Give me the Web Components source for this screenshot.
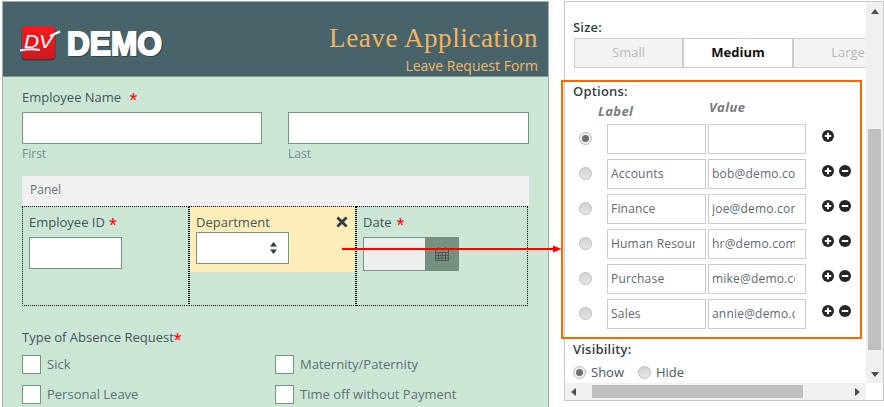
<!DOCTYPE html>
<html><head><meta charset="utf-8"><title>Leave Application</title>
<style>html,body{margin:0;padding:0;background:#fff}body{width:884px;height:407px;overflow:hidden;font-family:"Open Sans",sans-serif}</style>
</head><body>
<dv-app>
  <dv-form slot="form">
    <dv-header slot="header"></dv-header>
    <dv-name-row></dv-name-row>
    <dv-panel></dv-panel>
    <dv-absence></dv-absence>
  </dv-form>
  <dv-props slot="props"></dv-props>
  <dv-annotation slot="over"></dv-annotation>
</dv-app>
<script>
function def(name, css, html){
  customElements.define(name, class extends HTMLElement{
    constructor(){super();const s=this.attachShadow({mode:'open'});
      const h=typeof html==='function'?html(this):html;
      s.innerHTML='<style>'+css+'</style>'+h;}
  });
}
const star=(r)=>`<span style="color:#f00;font-size:20px;line-height:10px;margin-left:${r}px;font-family:'Liberation Sans',sans-serif;vertical-align:-5px">*</span>`;

def('dv-app',`:host{display:flex;position:relative;width:884px;height:407px;overflow:hidden;align-items:flex-start;padding-top:1px;padding-left:2px;box-sizing:border-box}
.g{display:block;width:15px;flex:none}`,
`<slot name="form"></slot><div class="g"></div><slot name="props"></slot><slot name="over"></slot>`);

def('dv-form',`:host{display:block;width:547px;height:420px;flex:none;box-sizing:border-box;border:1px solid #9fb2a8;background:#cbe6d5;box-shadow:3px 0 6px rgba(0,0,0,.03);color:#44555c;font-size:13px}
.b{padding:0 19px}`,`<slot name="header"></slot><div class="b"><slot></slot></div>`);

def('dv-logo',`:host{display:block;width:150px;height:44px}svg{display:block;overflow:visible}`,
`<svg width="150" height="44" viewBox="0 0 150 44">
<defs><linearGradient id="r" x1="0" y1="0" x2="0" y2="1"><stop offset="0" stop-color="#f2191f"/><stop offset="1" stop-color="#cf1a20"/></linearGradient></defs>
<rect x="-.5" y="1.500" width="34" height="33" rx="4" fill="#1d2b2e" opacity=".6"/>
<rect x="0" y="0" width="33" height="33" rx="4" fill="url(#r)"/>
<text x="2" y="22" font-family="'Liberation Sans',sans-serif" font-style="italic" font-size="19" fill="#fff" textLength="29" lengthAdjust="spacingAndGlyphs">DV</text>
<path d="M-2 24.500C6 23 12 23 18 24" stroke="#fff" stroke-width="2" fill="none"/>
<path d="M28 10L38 5.500" stroke="#fff" stroke-width="2" fill="none"/>
<text x="46" y="30" font-family="'Liberation Sans',sans-serif" font-weight="700" font-size="33" fill="#202f33" opacity=".55" stroke="#202f33" stroke-width="2" textLength="95" lengthAdjust="spacingAndGlyphs">DEMO</text>
<text x="45" y="29" font-family="'Liberation Sans',sans-serif" font-weight="700" font-size="33" fill="#fff" stroke="#fff" stroke-width="2" textLength="95" lengthAdjust="spacingAndGlyphs">DEMO</text>
</svg>`);

def('dv-header',`:host{display:flex;justify-content:space-between;height:74px;background:#48636a;border-bottom:1px solid #7d9c8c;padding:0 10px 0 19px}
dv-logo{margin-top:24px}
.r{text-align:right;color:#f3b562}
.t{font:27px/32px "Liberation Serif",serif;margin-top:20px;letter-spacing:.6px}
.s{font:400 14px/18px "Open Sans",sans-serif;margin-top:3px;color:#f0b868}`,
`<dv-logo></dv-logo><div class="r"><div class="t">Leave Application</div><div class="s">Leave Request Form</div></div>`);

def('dv-box',`:host{display:block;box-sizing:border-box;background:#fff;border:1px solid #76967f;height:32px}`,`<slot></slot>`);

def('dv-name-row',`:host{display:block;padding-top:11px}
.l{line-height:18px;height:18px;color:#44555c}
.g{display:grid;grid-template-columns:240px 241px;column-gap:26px;margin-top:6px}
.h{font-size:12px;line-height:16px;color:#7b8d8d;margin-top:2px}`,
`<div class="l">Employee Name ${star(5)}</div>
<div class="g"><div><dv-box></dv-box><div class="h">First</div></div><div><dv-box></dv-box><div class="h">Last</div></div></div>`);

def('dv-panel',`:host{display:block;margin-top:14px;width:507px}
.h{height:30px;background:#f0f0f0;font-size:12px;line-height:27px;padding-left:8px;color:#6a7272}
.r{display:flex}
.c{box-sizing:border-box;height:100px;border:1px dotted #000;flex:none;width:167px}
.c3{width:172px;padding:7px 6px}.c1{padding:7px 6px}
.l{line-height:16px;height:16px;color:#44555c}
.y{background:#fdeeb9;height:65px;box-sizing:border-box;padding:7px 6px 8px}
.yl{display:flex;justify-content:space-between;align-items:center;padding-right:1px}
.x{display:block}
.sel{margin-top:2px;width:93px}
.in1{margin-top:7px;width:93px}
.grp{margin-top:7px;display:flex;width:96px;height:34px;box-sizing:border-box}
.d{flex:1;background:#eee;border:1px solid #76967f;border-right:0;box-sizing:border-box}
.a{width:34px;background:#75907f;display:flex;align-items:center;justify-content:center}`,
`<div class="h">Panel</div><div class="r">
<div class="c c1"><div class="l">Employee ID${star(4)}</div><dv-box class="in1"></dv-box></div>
<div class="c"><div class="y"><div class="yl"><span class="l">Department</span>
<svg class="x" width="12" height="12" viewBox="0 0 12 12"><path d="M2.400 .6 6 4 9.600 .6 11.600 2.600 8 6 11.600 9.400 9.600 11.400 6 8 2.400 11.400 .4 9.400 4 6 .4 2.600Z" fill="#333f44"/></svg></div>
<dv-box class="sel"><svg width="9" height="13" viewBox="0 0 9 13" style="display:block;margin-left:72px;margin-top:9px"><path d="M4.500 0 8 4.500H1ZM1 7.500H8L4.500 12Z" fill="#2f3a3e"/></svg></dv-box></div></div>
<div class="c c3"><div class="l">Date${star(5)}</div><div class="grp"><div class="d"></div><div class="a">
<svg width="14" height="15" viewBox="0 0 14 15" style="margin:-1px 1px 0 0"><path d="M.5 3.500H13.500V14.500H.5ZM.5 6.500H13.500M.5 9.500H13.500M.5 12H13.500M3.500 6.500V14.500M7 6.500V14.500M10.500 6.500V14.500M3.500 1V3.500M10.500 1V3.500" fill="none" stroke="#4c5a55" stroke-width="1"/></svg></div></div></div>
</div>`);

def('dv-check',`:host{display:flex;align-items:center;height:19px;color:#5f7377;font-size:13px}
i{display:block;box-sizing:border-box;width:19px;height:19px;background:#fff;border:1px solid #76967f;margin-right:6px;flex:none}
span{display:block;margin-top:-2px}`,`<i></i><span><slot></slot></span>`);

def('dv-absence',`:host{display:block;margin-top:23px}
.l{line-height:16px;height:16px;color:#44555c}
.g{display:grid;grid-template-columns:253px 253px;row-gap:11px;margin-top:10px}`,
`<div class="l">Type of Absence Request${star(0)}</div>
<div class="g"><dv-check>Sick</dv-check><dv-check>Maternity/Paternity</dv-check><dv-check>Personal Leave</dv-check><dv-check>Time off without Payment</dv-check></div>`);

def('dv-radio',`:host{display:block;width:13px;height:13px;box-sizing:border-box;border-radius:50%;border:1px solid #bdbdbd;background:linear-gradient(#d2d2d2,#e6e6e6);flex:none;position:relative}
:host([checked]){background:#eee}
:host([checked]) i{display:block;position:absolute;left:2px;top:2px;width:7px;height:7px;border-radius:50%;background:#6f6f6f}`,`<i></i>`);

def('dv-opt',`:host{display:flex;align-items:center;height:30px}
dv-radio{margin-left:6px;margin-bottom:2px}
.i{box-sizing:border-box;height:30px;border:1px solid #ccc;background:#fff;font-size:12px;letter-spacing:.2px;color:#5c6a72;line-height:28px;padding:0 10px 0 3px}
.i div{overflow:hidden;white-space:nowrap;height:28px}
.a{width:99px;margin-left:15px}.b{width:98px;margin-left:2px}
svg{display:block;margin-bottom:6px;flex:none}
.p{margin-left:16px}.m{margin-left:5px}`,
(h)=>`<dv-radio ${h.hasAttribute('checked')?'checked':''}></dv-radio><div class="i a"><div>${h.getAttribute('label')||''}</div></div><div class="i b"><div>${h.getAttribute('value')||''}</div></div>
<svg class="p" width="12" height="12" viewBox="0 0 12 12"><circle cx="6" cy="6" r="6" fill="#262626"/><path d="M6 2.800V9.200M2.800 6H9.200" stroke="#fff" stroke-width="2"/></svg>
${h.hasAttribute('first')?'':'<svg class="m" width="12" height="12" viewBox="0 0 12 12"><circle cx="6" cy="6" r="6" fill="#262626"/><path d="M2.800 6H9.200" stroke="#fff" stroke-width="2"/></svg>'}`);

def('dv-props',`:host{display:grid;grid-template-columns:301px 17px;grid-template-rows:381px 17px;width:320px;height:400px;box-sizing:border-box;border:1px solid #c8c8c8;background:#fff;flex:none}
.c{overflow:hidden;padding:17px 0 0 8px;box-sizing:border-box;font-size:13px;color:#3c4a52}
.h{font-weight:600;line-height:16px;height:16px;letter-spacing:.2px;color:#333f46}
.seg{display:flex;margin:3px 0 0 1px;width:400px}
.seg div{box-sizing:border-box;height:30px;border:1px solid #ccc;background:#f3f3f3;color:#b9b9b9;text-align:center;line-height:26px;width:110px;font-weight:500}
.seg div:first-child{width:109px}
.seg .on{background:#fff;color:#111;font-weight:700}
.cols{display:flex;height:25px;font-weight:700;font-style:italic;color:#7b7b7b;line-height:16px;letter-spacing:.4px}
.cols span:first-child{margin:4px 0 0 25px;width:111px}
.rows{display:flex;flex-direction:column;gap:5px}
.vis{display:flex;align-items:center;margin-top:7px;height:16px;color:#4a5860}
.vis span{margin:0 14px 0 5px}
.vs{display:flex;flex-direction:column;align-items:center;background:#f0f0f0;grid-row:1;grid-column:2;height:381px}
.hs{display:flex;align-items:center;background:#f0f0f0;grid-row:2;grid-column:1}
.vt{width:13px;height:221px;background:#c0c0c0;margin-top:126px;margin-bottom:auto}
.ht{width:211px;height:13px;background:#c0c0c0;margin-left:27px;margin-right:auto}
.up,.dn{width:0;height:0;border:4px solid transparent}
.up{border-bottom:5px solid #4d4d4d;border-top:0;margin-top:7px;margin-bottom:-11px}
.dn{border-top:5px solid #4d4d4d;border-bottom:0;margin-bottom:6px}
.lf,.rg{width:0;height:0;border:4px solid transparent;flex:none}
.lf{border-right:5px solid #4d4d4d;border-left:0;margin-left:6px;margin-right:-11px}
.rg{border-left:5px solid #4d4d4d;border-right:0;margin-right:6px}`,
`<div class="c">
<div class="h">Size:</div>
<div class="seg"><div>Small</div><div class="on">Medium</div><div>Large</div></div>
<div class="h" style="margin-top:15px">Options:</div>
<div class="cols"><span>Label</span><span>Value</span></div>
<div class="rows">
<dv-opt checked first></dv-opt>
<dv-opt label="Accounts" value="bob@demo.com"></dv-opt>
<dv-opt label="Finance" value="joe@demo.com"></dv-opt>
<dv-opt label="Human Resources" value="hr@demo.com"></dv-opt>
<dv-opt label="Purchase" value="mike@demo.com"></dv-opt>
<dv-opt label="Sales" value="annie@demo.com"></dv-opt>
</div>
<div class="h" style="margin-top:12px">Visibility:</div>
<div class="vis"><dv-radio checked></dv-radio><span>Show</span><dv-radio></dv-radio><span>Hide</span></div>
</div>
<div class="vs"><div class="up"></div><div class="vt"></div><div class="dn"></div></div>
<div class="hs"><div class="lf"></div><div class="ht"></div><div class="rg"></div></div>`);

def('dv-annotation',`:host{display:block;position:absolute;left:0;top:0;width:884px;height:407px;pointer-events:none}
.o{position:absolute;left:561px;top:80px;width:301px;height:259px;box-sizing:border-box;border:2px solid #ff6600}
svg{position:absolute;left:0;top:0}`,
`<div class="o"></div><svg width="884" height="407"><path d="M342 249H555" stroke="#f00" stroke-width="2"/><path d="M553 245.500 561.500 249 553 252.500Z" fill="#f00"/></svg>`);
</script>
</body></html>
